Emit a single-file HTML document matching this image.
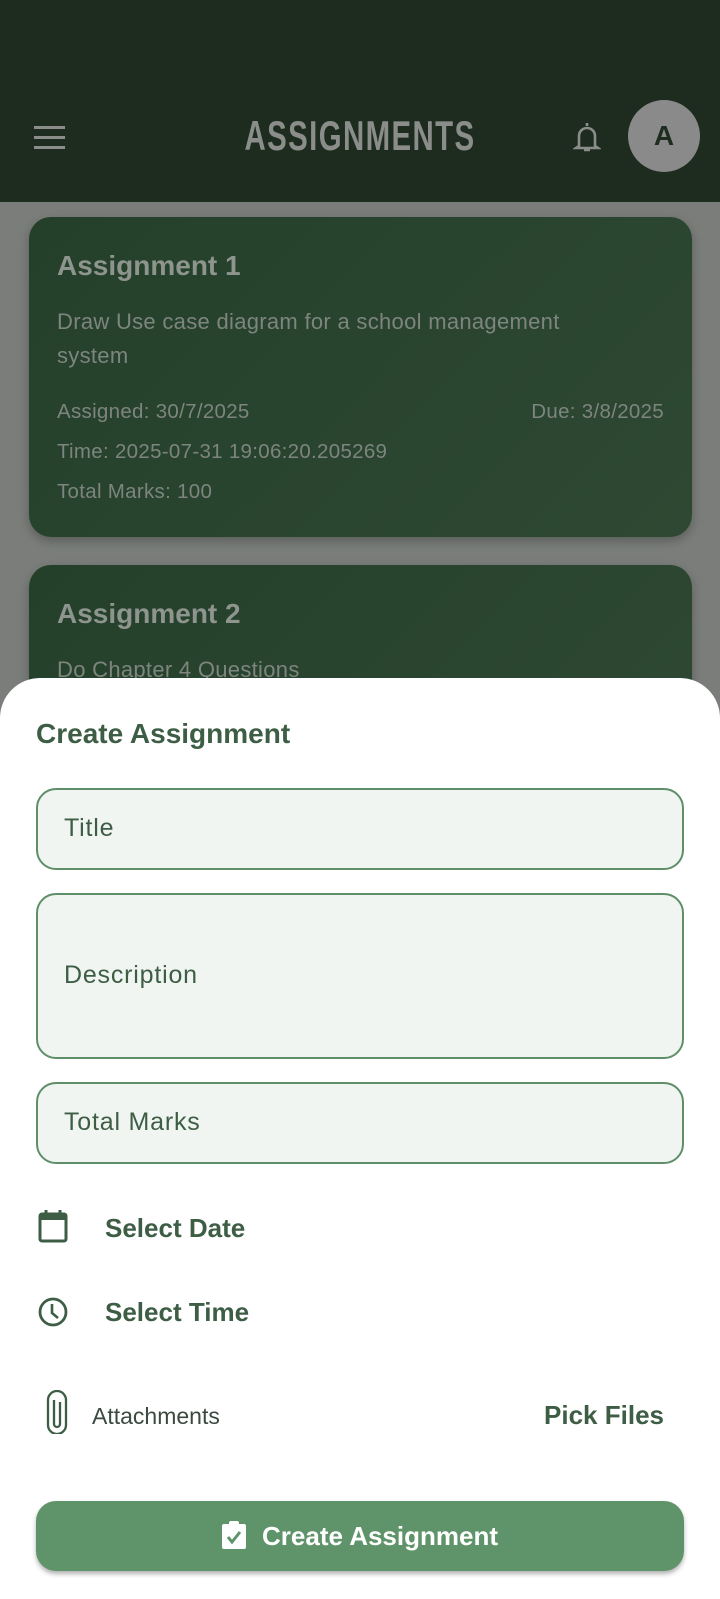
<!DOCTYPE html>
<html><head><meta charset="utf-8"><style>
*{margin:0;padding:0;box-sizing:border-box}
body{width:720px;height:1599px;overflow:hidden;background:#7a7d7a;font-family:"Liberation Sans",sans-serif;position:relative}
.hdr{position:absolute;left:0;top:0;width:720px;height:202px;background:#1d2c1f}
.title{position:absolute;left:0;width:720px;top:112px;text-align:center;color:#8a8d8a;font-weight:bold;font-size:42px;letter-spacing:2px;font-family:"Liberation Sans Narrow","Liberation Sans",sans-serif;transform:scaleX(.7)}
.ham{position:absolute;left:34px;width:31px;height:3px;background:#8a8d8a}
.av{position:absolute;left:628px;top:100px;width:72px;height:72px;border-radius:50%;background:#8a8a8a;color:#1d2c1f;font-size:28px;font-weight:bold;text-align:center;line-height:72px}
.card{position:absolute;left:29px;width:663px;border-radius:22px;background:linear-gradient(135deg,#24402a,#2e4833);box-shadow:0 4px 10px rgba(0,0,0,.25);color:#7d857e}
.card h2{position:absolute;left:28px;top:33px;font-size:28px;color:#8e948e}
.card p{position:absolute;left:28px;font-size:22px;line-height:34px;letter-spacing:.3px}
.sheet{position:absolute;left:0;top:678px;width:720px;height:921px;background:#fff;border-radius:40px 40px 0 0}
.h{position:absolute;left:36px;top:40px;font-size:28px;font-weight:bold;color:#3d5e45}
.f{position:absolute;left:36px;width:648px;border:2.5px solid #5e8f68;border-radius:20px;background:#f1f5f2;font-size:25px;color:#3d5e45;padding-left:26px;letter-spacing:.8px}
.lbl{position:absolute;left:105px;font-size:26px;font-weight:bold;color:#3d5e45}
.btn{position:absolute;left:36px;top:823px;width:648px;height:70px;border-radius:20px;background:#5f946a;box-shadow:0 3px 5px rgba(0,0,0,.3);color:#fff;font-size:26px;font-weight:bold;text-align:center;line-height:70px}
</style></head><body>
<div class="hdr">
<div class="ham" style="top:126px"></div><div class="ham" style="top:136px"></div><div class="ham" style="top:146px"></div>
<div class="title">ASSIGNMENTS</div>
<svg style="position:absolute;left:573px;top:120px" width="28" height="34" viewBox="0 0 28 34"><path d="M14 3v3M6 26V16a8 8 0 0 1 16 0v10l3 2H3z M11 30h6" fill="none" stroke="#8a8d8a" stroke-width="2.6"/></svg>
<div class="av">A</div>
</div>
<div class="card" style="top:217px;height:320px">
<h2>Assignment 1</h2>
<p style="top:88px;width:580px">Draw Use case diagram for a school management system</p>
<p style="top:178px;font-size:20.5px">Assigned: 30/7/2025</p>
<p style="top:178px;left:auto;right:28px;font-size:20.5px">Due: 3/8/2025</p>
<p style="top:218px;font-size:20.5px">Time: 2025-07-31 19:06:20.205269</p>
<p style="top:258px;font-size:20.5px">Total Marks: 100</p>
</div>
<div class="card" style="top:565px;height:200px">
<h2>Assignment 2</h2>
<p style="top:88px">Do Chapter 4 Questions</p>
</div>
<div class="sheet">
<div class="h">Create Assignment</div>
<div class="f" style="top:110px;height:82px;line-height:77px">Title</div>
<div class="f" style="top:215px;height:166px;line-height:161px">Description</div>
<div class="f" style="top:404px;height:82px;line-height:77px">Total Marks</div>
<svg style="position:absolute;left:37px;top:531px" width="32" height="34" viewBox="0 0 32 34"><rect x="3" y="5" width="26" height="27" rx="2" fill="none" stroke="#3d5e45" stroke-width="3"/><rect x="3" y="5" width="26" height="6" fill="#3d5e45"/><path d="M9 1v6M23 1v6" stroke="#3d5e45" stroke-width="3"/></svg>
<div class="lbl" style="top:535px">Select Date</div>
<svg style="position:absolute;left:37px;top:618px" width="32" height="32" viewBox="0 0 32 32"><circle cx="16" cy="16" r="13" fill="none" stroke="#3d5e45" stroke-width="2.8"/><path d="M15 8v9l6 5" fill="none" stroke="#3d5e45" stroke-width="2.6"/></svg>
<div class="lbl" style="top:619px">Select Time</div>
<svg style="position:absolute;left:45px;top:712px" width="24" height="44" viewBox="0 0 24 44"><path d="M15 12v22a3 3 0 0 1-6 0V10" fill="none" stroke="#3d5e45" stroke-width="2.3"/><path d="M3 10a9 9 0 0 1 18 0v25a9 9 0 0 1-18 0V10" fill="none" stroke="#3d5e45" stroke-width="2.3"/></svg>
<div style="position:absolute;left:92px;top:725px;font-size:23px;color:#3b4a3f">Attachments</div>
<div style="position:absolute;right:56px;top:722px;font-size:26px;font-weight:bold;color:#3d5e45">Pick Files</div>
<div class="btn"><svg style="vertical-align:-4px;margin-right:16px" width="24" height="28" viewBox="0 0 24 28"><rect x="0" y="3" width="24" height="25" rx="2" fill="#fff"/><rect x="7" y="0" width="10" height="6" rx="2" fill="#fff"/><path d="M6 16l4 5 8-10" fill="none" stroke="#5f946a" stroke-width="3"/></svg>Create Assignment</div>
</div>
</body></html>
